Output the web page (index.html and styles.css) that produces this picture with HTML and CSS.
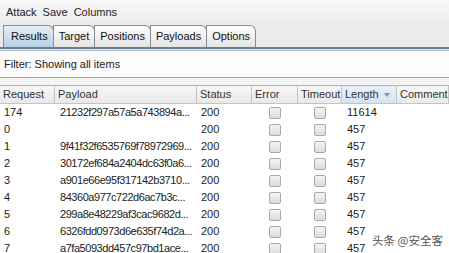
FILE: index.html
```html
<!DOCTYPE html>
<html>
<head>
<meta charset="utf-8">
<link rel="stylesheet" href="styles.css">
</head>
<body>
<div class="app">
  <div class="menubar"><span>Attack</span><span>Save</span><span>Columns</span></div>
  <div class="tabs">
    <div class="tab active">Results</div>
    <div class="tab">Target</div>
    <div class="tab">Positions</div>
    <div class="tab">Payloads</div>
    <div class="tab">Options</div>
  </div>
  <div class="tabline"></div>
  <div class="filter">Filter: Showing all items</div>
  <div class="gap"></div>
  <div class="grid">
    <div class="th">Request</div><div class="th">Payload</div><div class="th">Status</div><div class="th">Error</div><div class="th">Timeout</div><div class="th sorted">Length<span class="arrow"></span></div><div class="th">Comment</div>

    <div class="td">174</div><div class="td pl">21232f297a57a5a743894a...</div><div class="td">200</div><div class="td c"><span class="cb"></span></div><div class="td c"><span class="cb"></span></div><div class="td len">11614</div><div class="td"></div>
    <div class="td">0</div><div class="td pl"></div><div class="td">200</div><div class="td c"><span class="cb"></span></div><div class="td c"><span class="cb"></span></div><div class="td len">457</div><div class="td"></div>
    <div class="td">1</div><div class="td pl">9f41f32f6535769f78972969...</div><div class="td">200</div><div class="td c"><span class="cb"></span></div><div class="td c"><span class="cb"></span></div><div class="td len">457</div><div class="td"></div>
    <div class="td">2</div><div class="td pl">30172ef684a2404dc63f0a6...</div><div class="td">200</div><div class="td c"><span class="cb"></span></div><div class="td c"><span class="cb"></span></div><div class="td len">457</div><div class="td"></div>
    <div class="td">3</div><div class="td pl">a901e66e95f317142b3710...</div><div class="td">200</div><div class="td c"><span class="cb"></span></div><div class="td c"><span class="cb"></span></div><div class="td len">457</div><div class="td"></div>
    <div class="td">4</div><div class="td pl">84360a977c722d6ac7b3c...</div><div class="td">200</div><div class="td c"><span class="cb"></span></div><div class="td c"><span class="cb"></span></div><div class="td len">457</div><div class="td"></div>
    <div class="td">5</div><div class="td pl">299a8e48229af3cac9682d...</div><div class="td">200</div><div class="td c"><span class="cb"></span></div><div class="td c"><span class="cb"></span></div><div class="td len">457</div><div class="td"></div>
    <div class="td">6</div><div class="td pl">6326fdd0973d6e635f74d2a...</div><div class="td">200</div><div class="td c"><span class="cb"></span></div><div class="td c"><span class="cb"></span></div><div class="td len">457</div><div class="td"></div>
    <div class="td">7</div><div class="td pl">a7fa5093dd457c97bd1ace...</div><div class="td">200</div><div class="td c"><span class="cb"></span></div><div class="td c"><span class="cb"></span></div><div class="td len">457</div><div class="td"></div>
  </div>
  <div class="watermark">头条 @安全客</div>
</div>
</body>
</html>
```
FILE: styles.css
```css
html, body {
  margin: 0;
  padding: 0;
  background: #fff;
}
.app {
  position: relative;
  width: 449px;
  height: 253px;
  overflow: hidden;
  font-family: "Liberation Sans", Arial, sans-serif;
  font-size: 11px;
  color: #222;
}
.menubar {
  height: 23px;
  display: flex;
  align-items: center;
  gap: 6px;
  padding-left: 6px;
  background: linear-gradient(#f8f8f8, #ededed);
  color: #222;
}
.tabs {
  height: 24px;
  display: flex;
  align-items: flex-end;
  padding-left: 3px;
  background: linear-gradient(#ededed, #e9e9e9);
}
.tab {
  height: 21px;
  line-height: 21px;
  padding: 0 5px;
  border: 1px solid #8d8d8d;
  border-bottom: none;
  border-radius: 0 6px 0 0;
  background: linear-gradient(#ffffff, #e4e4e4);
  color: #111;
  margin-right: -1px;
}
.tab.active {
  background: linear-gradient(#e6eef7, #b8cfe5);
  border-color: #7d8fa3;
  padding: 0 5px 0 7px;
}
.tabline {
  height: 1px;
  border-top: 2px solid #6b7f94;
  border-bottom: 1px solid #aeb6bf;
  background: #dfe6ee;
}
.filter {
  height: 26px;
  line-height: 27px;
  padding-left: 4px;
  border-bottom: 1px solid #a3a3a3;
  background: #fcfcfc;
  color: #222;
}
.gap {
  height: 7px;
  background: #f3f3f3;
}
.grid {
  display: grid;
  grid-template-columns: 55px 142px 55px 46px 44px 55px 52px;
  grid-template-rows: 18px;
  grid-auto-rows: 17px;
  border-top: 1px solid #b5b5b5;
}
.th {
  line-height: 17px;
  padding-left: 3px;
  background: linear-gradient(#f7f7f7, #e9e9e9);
  border-right: 1px solid #c4c4c4;
  border-bottom: 1px solid #c4c4c4;
  color: #333;
  position: relative;
  white-space: nowrap;
  overflow: hidden;
}
.th.sorted {
  background: linear-gradient(#e9f1f8, #d5e3f0);
}
.arrow {
  position: absolute;
  right: 6px;
  top: 7px;
  width: 0;
  height: 0;
  border-left: 3px solid transparent;
  border-right: 3px solid transparent;
  border-top: 4px solid #7b96b3;
}
.td {
  line-height: 17px;
  padding-left: 4px;
  color: #222;
  white-space: nowrap;
  overflow: hidden;
}
.td.pl { padding-left: 5px; letter-spacing: -0.45px; }
.td.len { padding-left: 5px; }
.td.c {
  display: flex;
  align-items: center;
  justify-content: center;
  padding-left: 0;
}
.cb {
  width: 10px;
  height: 10px;
  border: 1px solid #a9a9a9;
  border-radius: 2px;
  background: linear-gradient(#f4f4f4, #dcdcdc);
}
.watermark {
  position: absolute;
  left: 372px;
  top: 232px;
  font-family: "Noto Sans CJK SC", sans-serif;
  font-size: 11.5px;
  color: #555;
  text-shadow: 0 0 2px #fff;
}
```
